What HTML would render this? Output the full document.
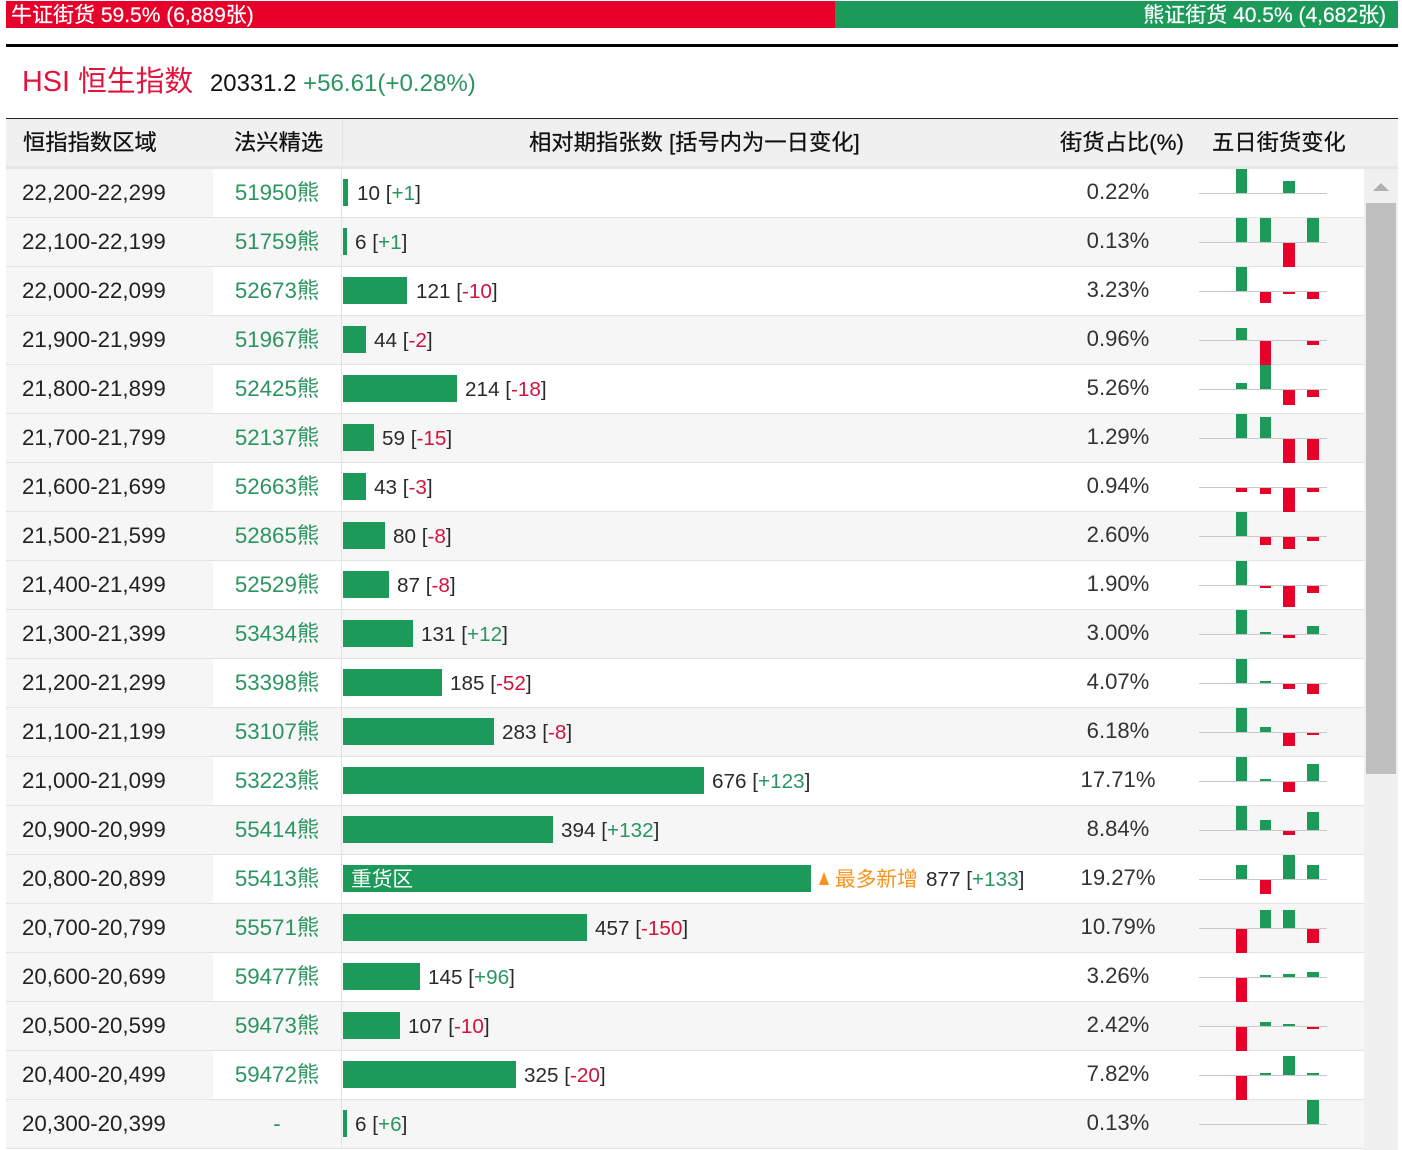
<!DOCTYPE html>
<html><head><meta charset="utf-8"><title>HSI</title>
<style>
html,body{margin:0;padding:0;background:#fff}
body{width:1402px;height:1150px;position:relative;overflow:hidden;font-family:"Liberation Sans","Noto Sans CJK SC",sans-serif;font-size:22.3px;color:#222}
div,span{position:absolute;white-space:nowrap}
i{font-style:normal}
.up{color:#2b9560}.dn{color:#d2123c}
.top{top:2px;height:27px;line-height:28px;color:#fff;font-size:21px;-webkit-text-stroke:.2px #fff}
.h{top:120px;height:47px;line-height:46px;color:#111;font-size:22.3px;-webkit-text-stroke:.25px #111}
.r{left:6px;width:1358px;height:48px;border-bottom:1px solid #e3e3e3;background:#fff;line-height:48px}
.g{background:#f6f6f6}
.a{left:0;top:0;width:207px;height:48px;background:#f6f6f6;padding-left:16px;box-sizing:border-box}
.c{left:207px;top:0;width:128px;height:48px;text-align:center;color:#2b9560}
.l{left:335px;top:0;width:1px;height:48px;background:#e3e3e3}
.bar{left:337px;top:10px;height:27px;background:#1b9a5a}
.t{top:1px;font-size:20.7px;color:#2a2a2a}
.p{left:1032px;width:160px;text-align:center;top:-1px;color:#333;font-size:22.1px}
.base{left:1193px;top:24px;width:128px;height:1px;background:#c8c8c8}
.b{width:11px}
.b1{left:1230px}.b2{left:1254px}.b3{left:1277px;width:12px}.b4{left:1301px;width:12px}
.u{background:#1b9a5a}.d{background:#e6002a}
</style></head><body>
<div style="left:6px;top:1px;width:829px;height:27px;background:#e6002a"></div>
<div style="left:835px;top:1px;width:563px;height:27px;background:#1b9a5a"></div>
<div class="top" style="left:11px">牛证街货 59.5% (6,889张)</div>
<div class="top" style="right:16px">熊证街货 40.5% (4,682张)</div>
<div style="left:6px;top:44px;width:1392px;height:3px;background:#000"></div>
<div style="left:22px;top:63px;line-height:38px;font-size:28.8px;color:#e0143c">HSI 恒生指数</div>
<div style="left:210px;top:66px;line-height:36px;font-size:23.9px;color:#111">20331.2</div>
<div style="left:303px;top:66px;line-height:36px;font-size:24.1px;color:#2b9560">+56.61(+0.28%)</div>
<div style="left:6px;top:118px;width:1392px;height:1px;background:#222"></div>
<div style="left:6px;top:119px;width:1392px;height:47px;background:#f0f0f0"></div>
<div style="left:6px;top:166px;width:1392px;height:3px;background:#e6e6e6"></div>
<div style="left:342px;top:119px;width:1px;height:47px;background:#e3e3e3"></div>
<div class="h" style="left:23px">恒指指数区域</div>
<div class="h" style="left:234px">法兴精选</div>
<div class="h" style="left:529px">相对期指张数 [括号内为一日变化]</div>
<div class="h" style="left:1060px">街货占比(%)</div>
<div class="h" style="left:1212px">五日街货变化</div>

<div class="r" style="top:169px"><div class="a">22,200-22,299</div><div class="c">51950熊</div><div class="l"></div><div class="bar" style="width:5px"></div><div class="t" style="left:351px">10 [<i class="up">+1</i>]</div><div class="p">0.22%</div><div class="base"></div><div class="b b1 u" style="top:0;height:24px"></div><div class="b b3 u" style="top:12px;height:12px"></div></div>
<div class="r g" style="top:218px"><div class="a">22,100-22,199</div><div class="c">51759熊</div><div class="l"></div><div class="bar" style="width:4px"></div><div class="t" style="left:349px">6 [<i class="up">+1</i>]</div><div class="p">0.13%</div><div class="base"></div><div class="b b1 u" style="top:0;height:24px"></div><div class="b b2 u" style="top:0;height:24px"></div><div class="b b3 d" style="top:25px;height:24px"></div><div class="b b4 u" style="top:0;height:24px"></div></div>
<div class="r" style="top:267px"><div class="a">22,000-22,099</div><div class="c">52673熊</div><div class="l"></div><div class="bar" style="width:64px"></div><div class="t" style="left:410px">121 [<i class="dn">-10</i>]</div><div class="p">3.23%</div><div class="base"></div><div class="b b1 u" style="top:0;height:24px"></div><div class="b b2 d" style="top:25px;height:11px"></div><div class="b b3 d" style="top:25px;height:2px"></div><div class="b b4 d" style="top:25px;height:7px"></div></div>
<div class="r g" style="top:316px"><div class="a">21,900-21,999</div><div class="c">51967熊</div><div class="l"></div><div class="bar" style="width:23px"></div><div class="t" style="left:368px">44 [<i class="dn">-2</i>]</div><div class="p">0.96%</div><div class="base"></div><div class="b b1 u" style="top:12px;height:12px"></div><div class="b b2 d" style="top:25px;height:24px"></div><div class="b b4 d" style="top:25px;height:4px"></div></div>
<div class="r" style="top:365px"><div class="a">21,800-21,899</div><div class="c">52425熊</div><div class="l"></div><div class="bar" style="width:114px"></div><div class="t" style="left:459px">214 [<i class="dn">-18</i>]</div><div class="p">5.26%</div><div class="base"></div><div class="b b1 u" style="top:18px;height:6px"></div><div class="b b2 u" style="top:0;height:24px"></div><div class="b b3 d" style="top:25px;height:15px"></div><div class="b b4 d" style="top:25px;height:7px"></div></div>
<div class="r g" style="top:414px"><div class="a">21,700-21,799</div><div class="c">52137熊</div><div class="l"></div><div class="bar" style="width:31px"></div><div class="t" style="left:376px">59 [<i class="dn">-15</i>]</div><div class="p">1.29%</div><div class="base"></div><div class="b b1 u" style="top:0;height:24px"></div><div class="b b2 u" style="top:3px;height:21px"></div><div class="b b3 d" style="top:25px;height:24px"></div><div class="b b4 d" style="top:25px;height:21px"></div></div>
<div class="r" style="top:463px"><div class="a">21,600-21,699</div><div class="c">52663熊</div><div class="l"></div><div class="bar" style="width:23px"></div><div class="t" style="left:368px">43 [<i class="dn">-3</i>]</div><div class="p">0.94%</div><div class="base"></div><div class="b b1 d" style="top:25px;height:4px"></div><div class="b b2 d" style="top:25px;height:6px"></div><div class="b b3 d" style="top:25px;height:24px"></div><div class="b b4 d" style="top:25px;height:4px"></div></div>
<div class="r g" style="top:512px"><div class="a">21,500-21,599</div><div class="c">52865熊</div><div class="l"></div><div class="bar" style="width:42px"></div><div class="t" style="left:387px">80 [<i class="dn">-8</i>]</div><div class="p">2.60%</div><div class="base"></div><div class="b b1 u" style="top:0;height:24px"></div><div class="b b2 d" style="top:25px;height:8px"></div><div class="b b3 d" style="top:25px;height:12px"></div><div class="b b4 d" style="top:25px;height:4px"></div></div>
<div class="r" style="top:561px"><div class="a">21,400-21,499</div><div class="c">52529熊</div><div class="l"></div><div class="bar" style="width:46px"></div><div class="t" style="left:391px">87 [<i class="dn">-8</i>]</div><div class="p">1.90%</div><div class="base"></div><div class="b b1 u" style="top:0;height:24px"></div><div class="b b2 d" style="top:25px;height:2px"></div><div class="b b3 d" style="top:25px;height:21px"></div><div class="b b4 d" style="top:25px;height:7px"></div></div>
<div class="r g" style="top:610px"><div class="a">21,300-21,399</div><div class="c">53434熊</div><div class="l"></div><div class="bar" style="width:70px"></div><div class="t" style="left:415px">131 [<i class="up">+12</i>]</div><div class="p">3.00%</div><div class="base"></div><div class="b b1 u" style="top:0;height:24px"></div><div class="b b2 u" style="top:22px;height:2px"></div><div class="b b3 d" style="top:25px;height:3px"></div><div class="b b4 u" style="top:16px;height:8px"></div></div>
<div class="r" style="top:659px"><div class="a">21,200-21,299</div><div class="c">53398熊</div><div class="l"></div><div class="bar" style="width:99px"></div><div class="t" style="left:444px">185 [<i class="dn">-52</i>]</div><div class="p">4.07%</div><div class="base"></div><div class="b b1 u" style="top:0;height:24px"></div><div class="b b2 u" style="top:22px;height:2px"></div><div class="b b3 d" style="top:25px;height:5px"></div><div class="b b4 d" style="top:25px;height:10px"></div></div>
<div class="r g" style="top:708px"><div class="a">21,100-21,199</div><div class="c">53107熊</div><div class="l"></div><div class="bar" style="width:151px"></div><div class="t" style="left:496px">283 [<i class="dn">-8</i>]</div><div class="p">6.18%</div><div class="base"></div><div class="b b1 u" style="top:0;height:24px"></div><div class="b b2 u" style="top:19px;height:5px"></div><div class="b b3 d" style="top:25px;height:13px"></div><div class="b b4 d" style="top:25px;height:2px"></div></div>
<div class="r" style="top:757px"><div class="a">21,000-21,099</div><div class="c">53223熊</div><div class="l"></div><div class="bar" style="width:361px"></div><div class="t" style="left:706px">676 [<i class="up">+123</i>]</div><div class="p">17.71%</div><div class="base"></div><div class="b b1 u" style="top:0;height:24px"></div><div class="b b2 u" style="top:22px;height:2px"></div><div class="b b3 d" style="top:25px;height:10px"></div><div class="b b4 u" style="top:7px;height:17px"></div></div>
<div class="r g" style="top:806px"><div class="a">20,900-20,999</div><div class="c">55414熊</div><div class="l"></div><div class="bar" style="width:210px"></div><div class="t" style="left:555px">394 [<i class="up">+132</i>]</div><div class="p">8.84%</div><div class="base"></div><div class="b b1 u" style="top:0;height:24px"></div><div class="b b2 u" style="top:14px;height:10px"></div><div class="b b3 d" style="top:25px;height:4px"></div><div class="b b4 u" style="top:6px;height:18px"></div></div>
<div class="r" style="top:855px"><div class="a">20,800-20,899</div><div class="c">55413熊</div><div class="l"></div><div class="bar" style="width:468px"></div><div class="t" style="left:345px;color:#fff">重货区</div><div style="left:813px;top:17px;width:0;height:0;border-left:5.5px solid transparent;border-right:5.5px solid transparent;border-bottom:13px solid #f7931e"></div><div class="t" style="left:829px;color:#f7931e">最多新增</div><div class="t" style="left:920px">877 [<i class="up">+133</i>]</div><div class="p">19.27%</div><div class="base"></div><div class="b b1 u" style="top:10px;height:14px"></div><div class="b b2 d" style="top:25px;height:14px"></div><div class="b b3 u" style="top:0;height:24px"></div><div class="b b4 u" style="top:10px;height:14px"></div></div>
<div class="r g" style="top:904px"><div class="a">20,700-20,799</div><div class="c">55571熊</div><div class="l"></div><div class="bar" style="width:244px"></div><div class="t" style="left:589px">457 [<i class="dn">-150</i>]</div><div class="p">10.79%</div><div class="base"></div><div class="b b1 d" style="top:25px;height:24px"></div><div class="b b2 u" style="top:6px;height:18px"></div><div class="b b3 u" style="top:6px;height:18px"></div><div class="b b4 d" style="top:25px;height:14px"></div></div>
<div class="r" style="top:953px"><div class="a">20,600-20,699</div><div class="c">59477熊</div><div class="l"></div><div class="bar" style="width:77px"></div><div class="t" style="left:422px">145 [<i class="up">+96</i>]</div><div class="p">3.26%</div><div class="base"></div><div class="b b1 d" style="top:25px;height:24px"></div><div class="b b2 u" style="top:22px;height:2px"></div><div class="b b3 u" style="top:21px;height:3px"></div><div class="b b4 u" style="top:19px;height:5px"></div></div>
<div class="r g" style="top:1002px"><div class="a">20,500-20,599</div><div class="c">59473熊</div><div class="l"></div><div class="bar" style="width:57px"></div><div class="t" style="left:402px">107 [<i class="dn">-10</i>]</div><div class="p">2.42%</div><div class="base"></div><div class="b b1 d" style="top:25px;height:24px"></div><div class="b b2 u" style="top:20px;height:4px"></div><div class="b b3 u" style="top:22px;height:2px"></div><div class="b b4 d" style="top:25px;height:2px"></div></div>
<div class="r" style="top:1051px"><div class="a">20,400-20,499</div><div class="c">59472熊</div><div class="l"></div><div class="bar" style="width:173px"></div><div class="t" style="left:518px">325 [<i class="dn">-20</i>]</div><div class="p">7.82%</div><div class="base"></div><div class="b b1 d" style="top:25px;height:24px"></div><div class="b b2 u" style="top:22px;height:2px"></div><div class="b b3 u" style="top:5px;height:19px"></div><div class="b b4 u" style="top:22px;height:2px"></div></div>
<div class="r g" style="top:1100px"><div class="a">20,300-20,399</div><div class="c">-</div><div class="l"></div><div class="bar" style="width:4px"></div><div class="t" style="left:349px">6 [<i class="up">+6</i>]</div><div class="p">0.13%</div><div class="base"></div><div class="b b4 u" style="top:0;height:24px"></div></div>

<div style="left:1364px;top:169px;width:34px;height:981px;background:#f0f0f0"></div>
<div style="left:1373px;top:183px;width:0;height:0;border-left:8px solid transparent;border-right:8px solid transparent;border-bottom:8px solid #b0b0b0"></div>
<div style="left:1366px;top:203px;width:30px;height:571px;background:#bfbfbf"></div>
</body></html>
